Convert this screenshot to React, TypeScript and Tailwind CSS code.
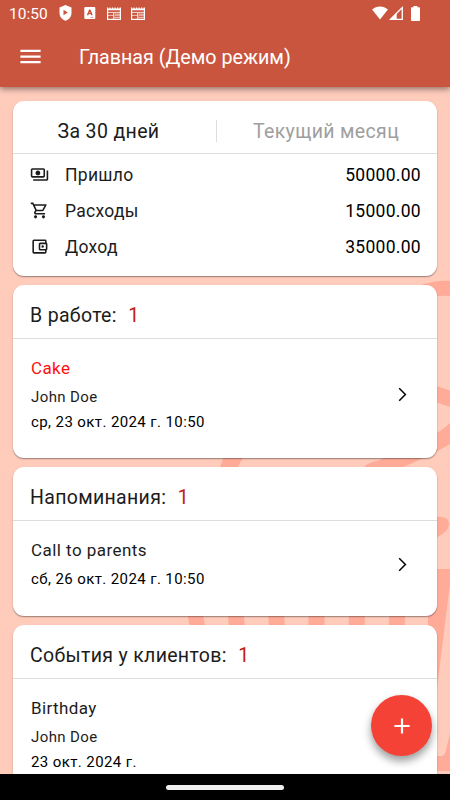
import React from 'react';
import { MdAdd, MdMenu, MdOutlineAccountBalanceWallet, MdOutlinePayments, MdOutlineShoppingCart } from 'react-icons/md';

const TOTALS = [
  { label: 'Пришло', value: '50000.00', icon: <MdOutlinePayments size={19} /> },
  { label: 'Расходы', value: '15000.00', icon: <MdOutlineShoppingCart size={19} /> },
  { label: 'Доход', value: '35000.00', icon: <MdOutlineAccountBalanceWallet size={19} /> },
];

const StatusBar = () => (
  <div className="flex h-7 items-center pl-[9px] pr-[29px]">
    <span className="w-[49px] text-[15.500px] leading-7">10:50</span>
    <svg width="15" height="16" viewBox="0 0 14 16" className="-mt-0.5">
      <path d="M7 0 13 2.400V8c0 3.600-2.400 6.400-6 7.700C3.400 14.400 1 11.600 1 8V2.400Z" fill="white" />
      <path d="M5 4.700v5.600l4.300-2.800Z" fill="#ca553e" />
    </svg>
    <svg width="12" height="12" viewBox="0 0 12 12" className="ml-[11px] -mt-0.5">
      <rect x="0.300" y="0" width="11" height="12" rx="1" fill="white" />
      <path d="M3.500 8.200 5.600 3.200h.4L8.100 8.200M4.200 6.500h3.200" fill="none" stroke="#ca553e" strokeWidth="1.400" />
      <path d="M6.500 10.400h3" stroke="#ca553e" strokeWidth=".6" />
    </svg>
    <NewsIcon className="ml-[11px] -mt-0.5" />
    <NewsIcon className="ml-[10px] -mt-0.5" />
    <div className="-mt-0.5 ml-auto flex items-center">
      <svg width="16" height="14" viewBox="0 0 16 14">
        <path d="M8 13.500.1 3.500C4.500-.6 11.500-.6 15.900 3.500Z" fill="white" />
      </svg>
      <svg width="15" height="14" viewBox="0 0 15 14" className="ml-px">
        <path d="M1.600 13.300 13.300 1.600v11.700Z" fill="none" stroke="white" strokeWidth="1.300" />
        <path d="M7.200 7v6.300" stroke="white" strokeWidth="1" />
        <path d="M7 8v5.300H1.600Z" fill="white" />
      </svg>
      <svg width="9" height="15" viewBox="0 0 9 15" className="ml-[7px] mr-[1px]">
        <path d="M2.500 0h4v1.300H8c.6 0 1 .4 1 1V14c0 .6-.4 1-1 1H1c-.6 0-1-.4-1-1V2.300c0-.6.4-1 1-1h1.500Z" fill="white" />
      </svg>
    </div>
  </div>
);

const NewsIcon = ({ className }: { className: string }) => (
  <svg width="14" height="13" viewBox="0 0 14 13" className={className}>
    <path d="M.6 3V12.400H13.400V3" fill="none" stroke="white" strokeWidth="1.200" />
    <path d="M0 .4h1.200v1h1.300v-1h1.200v1H5v-1h1.200v1h1.300v-1h1.200v1H10v-1h1.200v1h1.300v-1H14V3.200H0Z" fill="white" />
    <path d="M1 5.400h12" stroke="white" strokeWidth="1" opacity=".8" />
    <path d="M1 8.400h6M7.400 10.600h5.600" stroke="white" strokeWidth="1" opacity=".65" />
    <path d="M6.800 5.800v6.500" stroke="white" strokeWidth="1" />
    <path d="M8 6.500h5v2.800H8Z" fill="white" opacity=".5" />
  </svg>
);

const BackgroundArt = () => (
  <svg width="450" height="800" viewBox="0 0 450 800" className="absolute inset-0">
    <g fill="#ffab98">
      <path d="M418 286Q435 280 450 281V296Q440 295 430 297Z" />
      <path d="M430 384 450 390.500V407L430 400Z" />
      <path d="M450 423Q443 430 430 437L380 460Q363 464 365 468L400 468.500Q432 455 450 444Z" />
      <path d="M224 456h20L236 470H219Z" />
      <path d="M434 517c9-1 15 1 15 7s-6 10-15 15Z" />
      <path d="M187 612h15.500l3 16h-15.500Z" />
      <path d="M227.500 612H243.500l1.500 16h-16Z" />
      <path d="M268 612H284l1 16h-16Z" />
      <path d="M308.500 612h16v16h-16Z" />
      <path d="M349 612h16l-.5 16h-16Z" />
      <path d="M389.500 612h16l-1 16h-16Z" />
      <path d="M431 569h19v202h-22V612Z" />
    </g>
    <path d="M450 584 438 680 436 700V756h5q4 0 5-6l4-17Z" fill="#ffccbc" />
  </svg>
);

const Chevron = () => (
  <svg width="9" height="15" viewBox="0 0 9 15" className="mr-[12px] shrink-0">
    <path d="M1.200 1.300 7.400 7.500 1.200 13.700" fill="none" stroke="black" strokeWidth="1.500" />
  </svg>
);

const Card = ({ className, children }: { className: string; children: React.ReactNode }) => (
  <section className={`flex shrink-0 flex-col overflow-hidden rounded-[11px] bg-white shadow-[0_1px_1.5px_rgba(0,0,0,0.4)] ${className}`}>
    {children}
  </section>
);

const CardTitle = ({ title, count }: { title: string; count: number }) => (
  <h2 className="flex h-[54px] shrink-0 items-center gap-[11.500px] border-b border-[#dddddd] pl-[17px] pt-[9px] text-[19.500px] tracking-[0.320px]">
    <span>{title}</span>
    <span className="text-[#c3200c]">{count}</span>
  </h2>
);

export default function App() {
  return (
    <div className="relative flex h-[800px] w-[450px] flex-col overflow-hidden bg-[#ffccbc] font-['Roboto',sans-serif] text-[#1c1c1c]">
      <BackgroundArt />

      <header className="relative z-10 h-[87px] shrink-0 bg-[#ca553e] text-white shadow-[0_2px_6px_rgba(0,0,0,0.45)]">
        <StatusBar />
        <div className="flex h-[57px] items-center pl-[17px]">
          <MdMenu size={27} />
          <h1 className="ml-[35px] pt-[3px] text-[19.700px] leading-6">Главная (Демо режим)</h1>
        </div>
      </header>

      <main className="relative flex min-h-0 flex-1 flex-col gap-[9px] overflow-hidden px-[13px] pt-[13.500px]">
        <Card className="h-[175px]">
          <div className="flex h-[53px] shrink-0 items-center border-b border-[#dddddd] pt-[9px] text-[19.500px] tracking-[0.350px]">
            <button className="w-[203px] pr-[12px] pt-[2px]">За 30 дней</button>
            <span className="h-[22px] w-px bg-[#dddddd]" />
            <button className="flex-1 pr-[2px] pt-[2px] text-[#9e9e9e]">Текущий месяц</button>
          </div>
          <div className="flex flex-col pt-[3px] text-[17.500px] tracking-[0.300px]">
            {TOTALS.map(row => (
              <div key={row.label} className="flex h-9 items-center pl-[17px] pr-[16px]">
                <span className="w-[35px]">{row.icon}</span>
                <span className="flex-1 pt-[1px]">{row.label}</span>
                <span className="pt-[1px] text-black">{row.value}</span>
              </div>
            ))}
          </div>
        </Card>

        <Card className="h-[173.500px]">
          <CardTitle title="В работе:" count={1} />
          <div className="flex items-center justify-between px-[18px] pt-[16px]">
            <div className="tracking-[0.400px]">
              <p className="text-[17px] leading-[26px] text-[#ff1010]">Cake</p>
              <p className="mt-[3px] text-[15px] leading-[26px]">John Doe</p>
              <p className="text-[15px] leading-[24px] text-black">ср, 23 окт. 2024 г. 10:50</p>
            </div>
            <Chevron />
          </div>
        </Card>

        <Card className="h-[148.500px]">
          <CardTitle title="Напоминания:" count={1} />
          <div className="flex items-center justify-between px-[18px] pt-[16px]">
            <div className="tracking-[0.400px]">
              <p className="text-[17px] leading-[26px] tracking-[0.450px]">Call to parents</p>
              <p className="mt-[3px] text-[15px] leading-[26px] text-black">сб, 26 окт. 2024 г. 10:50</p>
            </div>
            <Chevron />
          </div>
        </Card>

        <Card className="h-[190px]">
          <CardTitle title="События у клиентов:" count={1} />
          <div className="px-[18px] pt-[16px] tracking-[0.400px]">
            <p className="text-[17px] leading-[26px]">Birthday</p>
            <p className="mt-[3px] text-[15px] leading-[26px]">John Doe</p>
            <p className="text-[15px] leading-[24px] text-black">23 окт. 2024 г.</p>
          </div>
        </Card>
      </main>

      <button className="absolute bottom-[44px] right-[18px] z-10 flex size-[61px] items-center justify-center rounded-full bg-[#f44336] text-white shadow-[0_5px_9px_rgba(0,0,0,0.4)]">
        <MdAdd size={26} />
      </button>

      <footer className="relative z-20 flex h-[26px] shrink-0 items-center justify-center bg-black">
        <div className="h-[5px] w-[118px] rounded-full bg-[#eeeeee]" />
      </footer>
    </div>
  );
}
